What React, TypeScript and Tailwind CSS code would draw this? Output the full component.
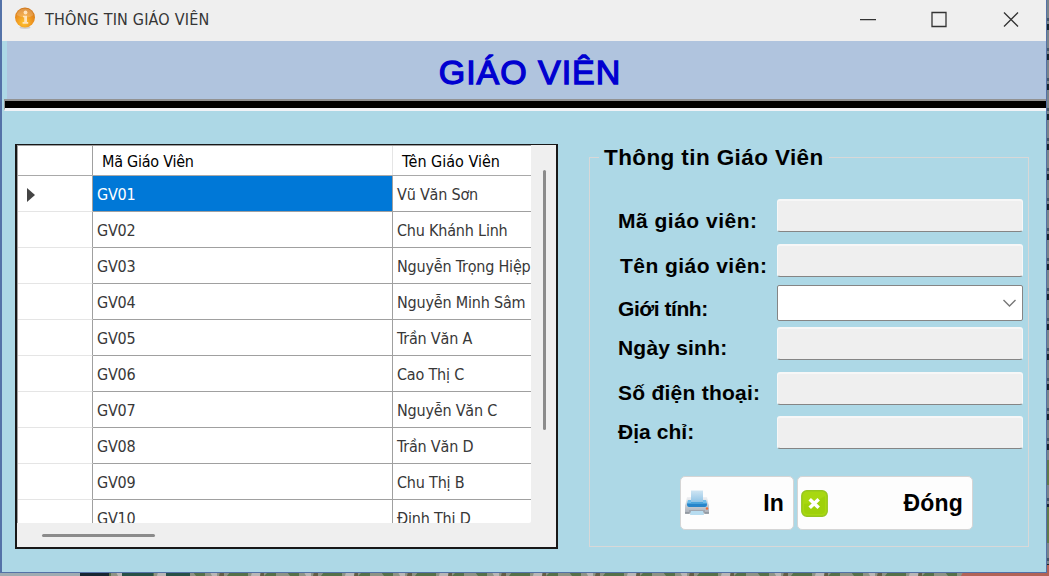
import React from "react";

const rows = [
  { id: "GV01", name: "Vũ Văn Sơn" },
  { id: "GV02", name: "Chu Khánh Linh" },
  { id: "GV03", name: "Nguyễn Trọng Hiệp" },
  { id: "GV04", name: "Nguyễn Minh Sâm" },
  { id: "GV05", name: "Trần Văn A" },
  { id: "GV06", name: "Cao Thị C" },
  { id: "GV07", name: "Nguyễn Văn C" },
  { id: "GV08", name: "Trần Văn D" },
  { id: "GV09", name: "Chu Thị B" },
  { id: "GV10", name: "Đinh Thị D" },
];

const fields = [
  { label: "Mã giáo viên:", row: "h-[45px]", text: "mt-[9px] tracking-[0.500px]", select: false },
  { label: "Tên giáo viên:", row: "h-[41px]", text: "mt-[9px] pl-[2px] tracking-[0.450px]", select: false },
  { label: "Giới tính:", row: "h-[42px]", text: "mt-[11px] tracking-[-0.450px]", select: true },
  { label: "Ngày sinh:", row: "h-[45px]", text: "mt-[8px] tracking-[0.200px]", select: false },
  { label: "Số điện thoại:", row: "h-[44px]", text: "mt-[8px] tracking-[0.250px]", select: false },
  { label: "Địa chỉ:", row: "h-[34px]", text: "mt-[3px] tracking-[0.050px]", select: false },
];

function InfoIcon() {
  return (
    <svg width="22" height="24" viewBox="0 0 22 24">
      <defs>
        <radialGradient id="orb" cx="0.45" cy="0.75" r="0.75">
          <stop offset="0" stopColor="#ffc52d" />
          <stop offset="0.55" stopColor="#ee9420" />
          <stop offset="1" stopColor="#cf7518" />
        </radialGradient>
      </defs>
      <ellipse cx="11" cy="21.300" rx="5.500" ry="1.600" fill="#cfcfcf" />
      <circle cx="11" cy="11.500" r="10" fill="url(#orb)" />
      <path d="M2.500 9a8.800 8.800 0 0 1 17 0q-4 3-8.500 2.500T2.500 9Z" fill="#fff" opacity="0.200" />
      <circle cx="11.500" cy="6.500" r="1.900" fill="#ffe3bb" />
      <path d="M9 9.700h4v6.300h1.200v1.700H8.600V16h1.600v-4.700H9Z" fill="#ffe3bb" />
    </svg>
  );
}

function PrinterIcon() {
  return (
    <svg width="26" height="26" viewBox="0 0 26 26">
      <defs>
        <linearGradient id="paper" x1="0" y1="0" x2="0" y2="1">
          <stop offset="0" stopColor="#cfe5f3" />
          <stop offset="1" stopColor="#91c4e6" />
        </linearGradient>
        <linearGradient id="body" x1="0" y1="0" x2="0" y2="1">
          <stop offset="0" stopColor="#f0f2f5" />
          <stop offset="1" stopColor="#a7adb6" />
        </linearGradient>
      </defs>
      <path d="M3 7h20l1.500 7 .500 1v7.500q0 1-1 1H2q-1 0-1-1V15l.500-1Z" fill="url(#body)" />
      <path d="M4 10h18l1.200 4q0 3-2.500 3H5.300q-2.500 0-2.500-3Z" fill="#70bdea" />
      <path d="M3 13.500h20q0 3.500-2.400 3.500H5.400Q3 17 3 13.500Z" fill="#2785ca" />
      <path d="M7 0.500h12V12H7Z" fill="url(#paper)" />
      <path d="M7 12h12v1.500H7Z" fill="#4ba5dd" />
      <path d="M5 20.500h16v1H5Z" fill="#8a939e" />
      <path d="M7 21h12l1 4H6Z" fill="#b7dcf0" />
      <path d="M1 22.300h4.500v1.500H1ZM20.500 22.300H25v1.500h-4.500Z" fill="#8b9199" />
      <circle cx="23" cy="18.500" r="1.200" fill="#f06f3a" />
    </svg>
  );
}

function CloseBadge() {
  return (
    <svg width="27" height="27" viewBox="0 0 27 27">
      <rect x="0.800" y="0.800" width="25.400" height="25.400" rx="5" fill="#a8d810" stroke="#96c61f" strokeWidth="1.400" />
      <path d="M3 14q10-1 21-8v14q0 4-4 4H7q-4 0-4-4Z" fill="#98cd06" opacity="0.600" />
      <path d="M8.700 9.200l9 8.500M17.700 9.200l-9 8.500" stroke="#fff" strokeWidth="3.600" />
    </svg>
  );
}

function Backdrop() {
  return (
    <svg className="absolute inset-0" width="1049" height="576">
      <defs>
        <pattern id="side" width="4" height="30" patternUnits="userSpaceOnUse">
          <rect width="4" height="30" fill="#79848a" />
          <rect y="18" width="4" height="3" fill="#415463" />
          <rect y="24" width="4" height="6" fill="#16262e" />
        </pattern>
        <pattern id="foliage" width="94" height="4" patternUnits="userSpaceOnUse">
          <rect width="94" height="4" fill="#8d9385" />
          <path d="M5 0h12v4H8ZM42 0h18v4H39ZM79 1h9v3H76Z" fill="#55704a" />
          <path d="M22 0h7v4H24ZM64 0h8v4H63Z" fill="#b9b7b6" />
          <path d="M32 0h4v4H31ZM73 0h3v4H72Z" fill="#625e47" />
        </pattern>
      </defs>
      <rect x="1046" width="3" height="576" fill="url(#side)" />
      <rect y="572" width="1049" height="4" fill="url(#foliage)" />
      <rect y="572" width="80" height="4" fill="#9eacb2" />
      <path d="M80 572h29v4H80Z" fill="#172632" />
      <path d="M122 572h31v4h-31ZM166 572h24v4h-24Z" fill="#285047" />
      <path d="M963 572h86v4h-88ZM1046 565h3v11h-3Z" fill="#b26357" />
      <path d="M1046 460h3v25h-3ZM1046 507h3v36h-3Z" fill="#607a4a" />
    </svg>
  );
}

export default function App() {
  return (
    <div className="relative h-[576px] w-[1049px] overflow-hidden bg-[#79848a] font-['Liberation_Sans',sans-serif] text-black">
      <Backdrop />
      <div className="relative flex h-[573px] w-[1047px] flex-col border-r border-b border-l-2 border-[#5472a8] bg-[#add8e6]">
        <header className="flex h-[41px] shrink-0 items-start bg-[#efefef] pl-[12px]">
          <div className="mt-[6px]"><InfoIcon /></div>
          <h2 className="mt-[9px] ml-[9px] font-['DejaVu_Sans_Condensed','DejaVu_Sans',sans-serif] text-[16px] leading-[22px] tracking-[0.200px] whitespace-nowrap text-[#353535] [font-stretch:condensed]">THÔNG TIN GIÁO VIÊN</h2>
          <svg className="mt-[11px] mr-[25px] ml-auto" width="162" height="17" viewBox="0 0 162 17" fill="none" stroke="#333" strokeWidth="1.300">
            <path d="M1 8.600h16M73 1.500h14v14h-14ZM145 1.500l14 14M159 1.500l-14 14" />
          </svg>
        </header>
        <div className="ml-[5px] h-[58px] shrink-0 bg-[#b0c4de] text-center">
          <h1 className="pt-[11px] pl-[7px] text-[34px] leading-[40px] tracking-[0.950px] text-[#0000d0] [-webkit-text-stroke:1.300px_#0000d0]">GIÁO VIÊN</h1>
        </div>
        <div className="ml-[2px] h-[12px] shrink-0 border-t-2 border-b-[3px] border-l border-t-[#929292] border-b-[#f1f3f7] border-l-[#929292] bg-black" />
        <main className="flex flex-1 items-start pl-[13px]">
          <section className="mt-[33px] flex h-[405px] w-[543px] flex-col overflow-hidden border-2 border-t-[1.500px] border-[#181818] bg-[#efefef]">
            <div className="flex h-[378px]">
              <div className="h-[378px] w-[514px] overflow-hidden rounded-br-[2px] border-t border-l border-[#a0a0a0] bg-white font-['DejaVu_Sans_Condensed','DejaVu_Sans',sans-serif] text-[16px] tracking-[-0.250px] text-[#383838] [font-stretch:condensed]">
                <div className="flex h-[30px] border-b-[1.500px] border-[#a9a9a9] text-black">
                  <div className="w-[75px] border-r border-[#a0a0a0]" />
                  <div className="w-[300px] border-r border-[#e5e5e5] pl-[9px] leading-[32px]">Mã Giáo Viên</div>
                  <div className="pl-[9px] leading-[32px] tracking-[0px] whitespace-nowrap">Tên Giáo Viên</div>
                </div>
                {rows.map((r, i) => (
                  <div key={r.id} className="flex h-[36px]">
                    <div className="flex w-[75px] items-center border-r border-b border-r-[#a0a0a0] border-b-[#e5e5e5] pt-[2px] pl-[9px]">
                      {i === 0 && <svg width="8" height="14" viewBox="0 0 8 14"><path d="M0 0l8 7-8 7Z" fill="#444" /></svg>}
                    </div>
                    <div className={i === 0 ? "w-[300px] border-r border-b border-[#a0a0a0] bg-[#0078d7] pl-[4px] leading-[38px] text-white" : "w-[300px] border-r border-b border-[#a0a0a0] pl-[4px] leading-[38px]"}>{r.id}</div>
                    <div className="w-[138px] overflow-hidden border-b border-[#a0a0a0] pl-[4px] leading-[38px] tracking-[-0.200px] whitespace-nowrap">{r.name}</div>
                  </div>
                ))}
              </div>
              <div className="flex flex-1 justify-center pt-[25px] pl-[1px]"><div className="h-[260px] w-[3px] rounded-full bg-[#8b8b8b]" /></div>
            </div>
            <div className="flex flex-1 items-center pl-[25px]"><div className="h-[3px] w-[113px] rounded-full bg-[#8b8b8b]" /></div>
          </section>
          <fieldset className="mt-[33px] ml-[31px] h-[403px] w-[440px] border border-[#d8d8d8] pl-[28px]">
            <legend className="-ml-[19px] px-[5px] text-[22.500px] leading-[26px] font-bold tracking-[0.400px] whitespace-nowrap"><span className="relative top-px">Thông tin Giáo Viên</span></legend>
            <div className="mt-[29px]">
              {fields.map((f) => (
                <div key={f.label} className={`flex items-start ${f.row}`}>
                  <label className={`w-[159px] text-[21px] leading-[26px] font-bold whitespace-nowrap ${f.text}`}>{f.label}</label>
                  {f.select ? (
                    <div className="flex h-[36px] w-[246px] items-center justify-end rounded-[2px] border border-[#858585] bg-white pr-[6px]">
                      <svg width="13" height="8" viewBox="0 0 13 8" fill="none" stroke="#777" strokeWidth="1.400"><path d="M.500 1l6 6 6-6" /></svg>
                    </div>
                  ) : (
                    <div className="h-[33px] w-[246px] rounded-[3px] border border-t-2 border-[#f7f7f7] border-b-[#858585] bg-[#efefef]" />
                  )}
                </div>
              ))}
            </div>
            <div className="mt-[26px] ml-[62px] flex gap-[3px] text-[23px] font-bold tracking-[0.200px]">
              <button className="flex h-[54px] w-[114px] items-center justify-between rounded-[5px] border border-b-[1.500px] border-[#d5d5d5] bg-[#fdfdfd] pr-[9px] pl-[3px]">
                <PrinterIcon /><span>In</span>
              </button>
              <button className="flex h-[54px] w-[176px] items-center justify-between rounded-[5px] border border-b-[1.500px] border-[#d5d5d5] bg-[#fdfdfd] pr-[9px] pl-[3px]">
                <CloseBadge /><span>Đóng</span>
              </button>
            </div>
          </fieldset>
        </main>
      </div>
    </div>
  );
}
